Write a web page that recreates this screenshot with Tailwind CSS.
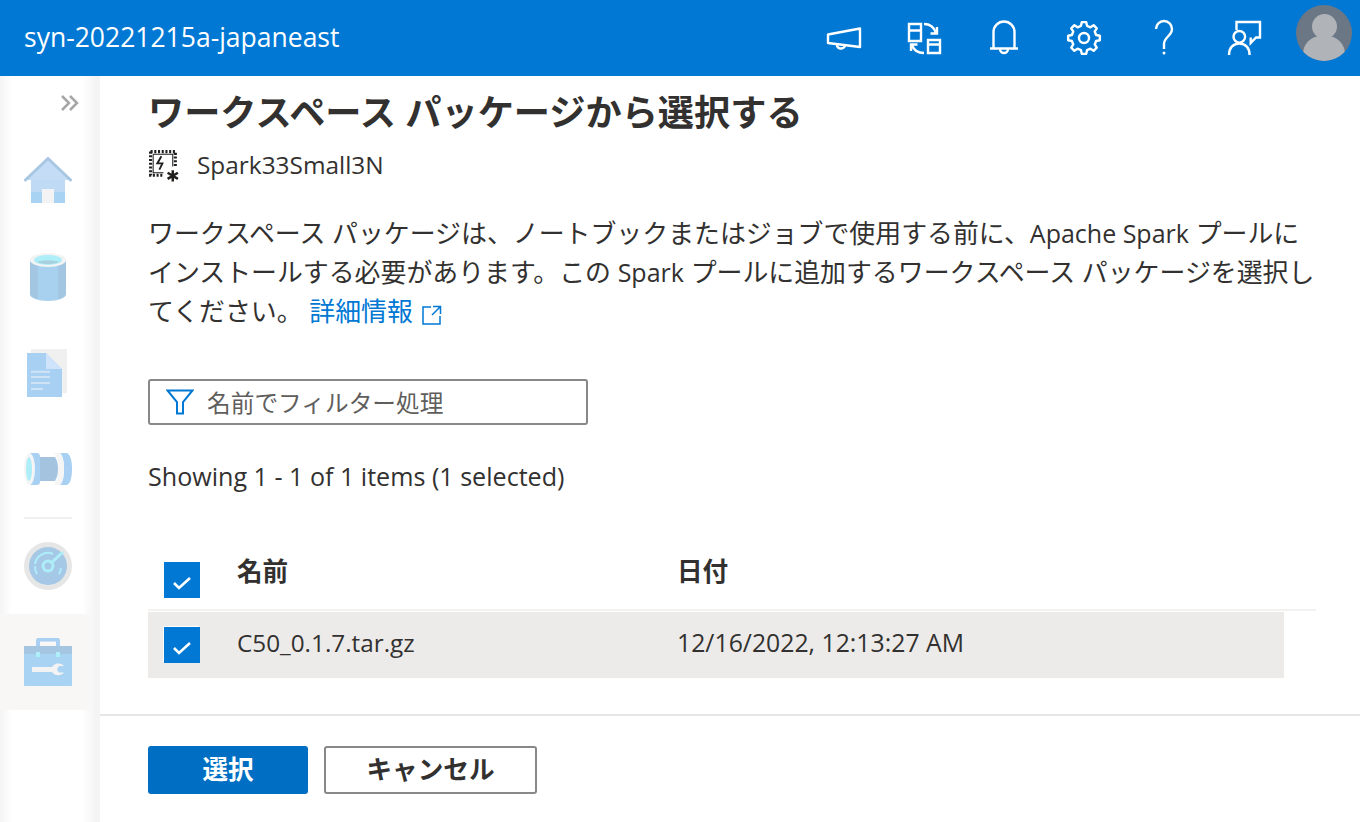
<!DOCTYPE html>
<html lang="ja">
<head>
  <meta charset="UTF-8">
  <title>syn-20221215a-japaneast</title>
  <script src="https://cdn.jsdelivr.net/npm/@tailwindcss/browser@4"></script>
</head>
<body class="bg-white text-[#323130] font-['Open_Sans','Noto_Sans_CJK_JP',sans-serif] h-[822px] w-[1360px] overflow-hidden flex flex-col">

  <!-- Top bar -->
  <header class="h-[76px] bg-[#0078d4] text-white flex items-center justify-between pl-6 pr-2 shrink-0">
    <span class="text-[26.500px]">syn-20221215a-japaneast</span>
    <div class="flex items-center h-full">
      <button class="w-20 flex justify-center">
        <svg width="40" height="40" viewBox="0 0 40 40" fill="none" stroke="white" stroke-width="2.400" stroke-linejoin="round"><path d="M4 16.500 36 10.500V29L4 25Z"/><path d="M13 26.500a4 3.500 0 0 0 8 1"/></svg>
      </button>
      <button class="w-20 flex justify-center">
        <svg width="40" height="40" viewBox="0 0 40 40" fill="none" stroke="white" stroke-width="2.400"><path d="M5 6h12v17H5ZM5 12.500h12M24 22h12v13H24ZM24 26.500h12"/><path d="M20 6c6 0 10 3 12 9M33 9v6.500h-6.500M20 35c-6 0-10-2-12-8M7 33v-6.500h6.500"/></svg>
      </button>
      <button class="w-20 flex justify-center">
        <svg width="40" height="40" viewBox="0 0 40 40" fill="none" stroke="white" stroke-width="2.400"><path d="M9.500 30V14a10.500 10.500 0 0 1 21 0v16M6 30.500h28M16 31a4 4 0 0 0 8 0"/></svg>
      </button>
      <button class="w-20 flex justify-center">
        <svg width="40" height="40" viewBox="0 0 40 40" fill="none" stroke="white" stroke-width="2.400" stroke-linejoin="round"><polygon points="17.77,4.16 22.23,4.16 23.02,7.87 26.44,9.29 29.63,7.22 32.78,10.37 30.71,13.56 32.13,16.98 35.84,17.77 35.84,22.23 32.13,23.02 30.71,26.44 32.78,29.63 29.63,32.78 26.44,30.71 23.02,32.13 22.23,35.84 17.77,35.84 16.98,32.13 13.56,30.71 10.37,32.78 7.22,29.63 9.29,26.44 7.87,23.02 4.16,22.23 4.16,17.77 7.87,16.98 9.29,13.56 7.22,10.37 10.37,7.22 13.56,9.29 16.98,7.87"/><circle cx="20" cy="20" r="5"/></svg>
      </button>
      <button class="w-20 flex justify-center">
        <svg width="40" height="40" viewBox="0 0 40 40" fill="none" stroke="white" stroke-width="2.400"><path d="M12 11a8 8 0 0 1 16 0c0 7-8 8-8 15v5"/><circle cx="20" cy="35" r="1.500" fill="white" stroke="none"/></svg>
      </button>
      <button class="w-20 flex justify-center">
        <svg width="40" height="40" viewBox="0 0 40 40" fill="none" stroke="white" stroke-width="2.400"><path d="M12.500 12V4H36v15.500h-4L26.700 25v-5.500"/><circle cx="15.300" cy="18.800" r="5.800"/><path d="M5 37c0-7 4-11.500 10.300-11.500S25.600 30 25.600 37"/></svg>
      </button>
      <div class="ml-3 w-14 h-14 -mt-2.5 rounded-full bg-[#6b7785] overflow-hidden flex flex-col items-center">
        <div class="w-[25px] h-[29px] mt-[9px] rounded-full bg-[#b0b4b8]"></div>
        <div class="w-[42px] h-7 -mt-[3px] rounded-t-[18px] bg-[#b0b4b8]"></div>
      </div>
    </div>
  </header>

  <div class="flex flex-1 min-h-0">

    <!-- Side nav -->
    <nav class="w-[100px] shrink-0 border-r-4 border-[#f4f4f4] bg-[linear-gradient(90deg,#f4f4f4,#fff_12%,#fff_86%,#f4f4f4)] flex flex-col">
      <div class="h-[57px] flex justify-end items-center pr-[16px] pb-[3px]">
        <svg width="20" height="18" viewBox="0 0 20 18" fill="none" stroke="#a6a6a6" stroke-width="2.500"><path d="M2 2l7 7-7 7M10 2l7 7-7 7"/></svg>
      </div>
      <div class="h-24 flex items-center justify-center">
        <svg width="48" height="48" viewBox="0 0 48 48"><path d="M7 22h34v24H7Z" fill="#a8d3f2"/><path d="M1.500 23 24 1.500 46.500 23" fill="#c5dcf6" stroke="#a7c7e3" stroke-width="3" stroke-linejoin="round" stroke-linecap="round"/><path d="M7 23h34v12H7Z" fill="#bfdaf5"/><path d="M18 32h12v14H18Z" fill="#f3f3f3"/></svg>
      </div>
      <div class="h-24 flex items-center justify-center">
        <svg width="48" height="48" viewBox="0 0 48 48"><path d="M6 7h36v34c0 4-8 7-18 7S6 45 6 41Z" fill="#a8d0ef"/><path d="M6 7h8v39c-5-1-8-3-8-5ZM42 7h-8v39c5-1 8-3 8-5Z" fill="#a3c6e2"/><ellipse cx="24" cy="7" rx="18" ry="7" fill="#f3f3f3"/><ellipse cx="24" cy="7" rx="14" ry="5" fill="#aeeef8"/><path d="M13 9a12 3 0 0 1 22 0c-3 1.500-7 2-11 2s-8-.5-11-2Z" fill="#a8d0de"/></svg>
      </div>
      <div class="h-24 flex items-center justify-center">
        <svg width="48" height="48" viewBox="0 0 48 48"><rect x="7" y="0" width="36" height="44" fill="#f0f0f0"/><path d="M3 4h19l16 16v28H3Z" fill="#a8d0f2"/><path d="M22 4l16 16H22Z" fill="#cfe4fa"/><path d="M7 22.700h19M7 28h19M7 34h19M7 40h12" stroke="#cfe3f5" stroke-width="2"/></svg>
      </div>
      <div class="h-24 flex items-center justify-center">
        <svg width="48" height="48" viewBox="0 0 48 48"><path d="M36 8h6c4 0 6 7 6 16s-2 16-6 16h-6c3-3 4-9 4-16s-1-13-4-16Z" fill="#a8d0f2"/><path d="M30 8h6c3 3 4 9 4 16s-1 13-4 16h-6c3-3 4-9 4-16s-1-13-4-16Z" fill="#f5f5f5"/><path d="M10 12h21c2 3 3 7 3 12s-1 9-3 12H10Z" fill="#a3c3df"/><path d="M6 8h7c2 0 3 1 3 4v24c0 3-1 4-3 4H6Z" fill="#a8d0f2"/><ellipse cx="5.500" cy="24" rx="5.500" ry="16" fill="#f5f5f5"/><ellipse cx="5" cy="24" rx="3" ry="12" fill="#aeeef8"/></svg>
      </div>
      <div class="h-0.5 mx-6 bg-[#f0f0f0] w-12 -mb-px"></div>
      <div class="h-24 flex items-center justify-center">
        <svg width="48" height="48" viewBox="0 0 48 48" fill="none"><circle cx="24" cy="24" r="24" fill="#e6e6e6"/><circle cx="24" cy="24" r="19" fill="#a5c8e6"/><circle cx="24" cy="24" r="5" stroke="#aeeef8" stroke-width="3"/><path d="M27 21 39 10" stroke="#aeeef8" stroke-width="3"/><path d="M13 32a13 13 0 0 1-2-8M35 32a13 13 0 0 0 2-6M11 22a13 13 0 0 1 18-10" stroke="#aeeef8" stroke-width="2"/></svg>
      </div>
      <div class="h-24 w-[90px] bg-[#f8f7f6] flex items-center justify-center pl-1.5">
        <svg width="48" height="48" viewBox="0 0 48 48"><path d="M14 10V3a1.500 1.500 0 0 1 1.500-1.500h17A1.500 1.500 0 0 1 34 3v7" fill="none" stroke="#a8d0f2" stroke-width="4"/><rect x="0" y="8" width="48" height="40" rx="1" fill="#a8d3f3"/><path d="M0 9a1 1 0 0 1 1-1h46a1 1 0 0 1 1 1v7H0Z" fill="#a5c6e0"/><rect x="12" y="14" width="4" height="5" fill="#aeeef8"/><rect x="32" y="14" width="4" height="5" fill="#aeeef8"/><path d="M8 29h20a7 6 0 0 1 12-1h-5l-2 3.500 2 3h5a7 6 0 0 1-12-.5H8Z" fill="#f3f3f3"/></svg>
      </div>
    </nav>

    <!-- Panel -->
    <main class="flex-1 flex flex-col min-w-0">
      <div class="flex-1 pl-12">
        <h1 class="h-[72px] flex items-center text-[36.200px] font-bold">ワークスペース パッケージから選択する</h1>

        <div class="h-[34px] flex items-center gap-[16px]">
          <svg width="33" height="33" viewBox="0 0 32 32" fill="none" stroke="#201f1e"><path d="M2.500 2.500h24v15M2.500 2.500v23h13" stroke-width="3" stroke-dasharray="2 1.600"/><path d="M5 5h19v12M5 5v18h10" stroke-width="1"/><path d="M13 7l-4 7h5l-3 6" stroke-width="1.800"/><path d="M24 20.500v11M19 23l10 6M29 23l-10 6" stroke-width="2.400"/></svg>
          <span class="text-[24.400px]">Spark33Small3N</span>
        </div>

        <p class="mt-[32px] text-[25.900px] leading-[39px] whitespace-nowrap">
          ワークスペース パッケージは、ノートブックまたはジョブで使用する前に、<span class="text-[25px]">Apache Spark</span> プールに<br>
          インストールする必要があります。この <span class="text-[25px]">Spark</span> プールに追加するワークスペース パッケージを選択し<br>
          てください。
          <a href="#" class="text-[#0078d4] inline-flex items-center gap-[9px]">詳細情報
            <svg width="20" height="20" viewBox="0 0 20 20" fill="none" stroke="#0078d4" stroke-width="1.500" class="mt-1.5"><path d="M9 2H1v17h17v-8M11 1.500h7.500V9M18 2l-8 8"/></svg>
          </a>
        </p>

        <label class="mt-[48px] w-[440px] h-[46px] border-2 border-[#8a8886] rounded-[3px] flex items-center pl-4 gap-[13px]">
          <svg width="28" height="26" viewBox="0 0 28 26" fill="none" stroke="#0078d4" stroke-width="2"><path d="M1.500 1.500h25l-9.500 11.500v11.500h-6V13Z"/></svg>
          <span class="text-[23.700px] text-[#605e5c] pt-[3px]">名前でフィルター処理</span>
        </label>

        <p class="mt-[35px] h-[34px] flex items-center text-[25.100px]">Showing 1 - 1 of 1 items (1 selected)</p>

        <!-- Table -->
        <div class="mt-[66px] w-[1168px]">
          <div class="h-[51px] border-b-2 border-[#f3f2f1] flex">
            <div class="w-[89px] pl-4 pt-[2px]">
              <span class="block w-9 h-9 bg-[#0078d4]">
                <svg width="36" height="36" viewBox="0 0 36 36" fill="none" stroke="white" stroke-width="2.600"><path d="M10 21l5 5 11-10"/></svg>
              </span>
            </div>
            <div class="w-[440px] text-[25.600px] font-bold leading-[24px]">名前</div>
            <div class="text-[25.600px] font-bold leading-[24px]">日付</div>
          </div>
          <div class="w-[1136px] h-[66px] mt-px bg-[#edebe9] flex items-center">
            <div class="w-[89px] pl-4">
              <span class="block w-9 h-9 bg-[#0078d4] shadow-[-1px_-1px_0_#fff]">
                <svg width="36" height="36" viewBox="0 0 36 36" fill="none" stroke="white" stroke-width="2.600"><path d="M10 21l5 5 11-10"/></svg>
              </span>
            </div>
            <div class="w-[440px] text-[24.300px] pb-1">C50_0.1.7.tar.gz</div>
            <div class="text-[24.800px] pb-1">12/16/2022, 12:13:27 AM</div>
          </div>
        </div>
      </div>

      <!-- Footer -->
      <footer class="h-[108px] border-t-2 border-[#e6e6e6] pl-12 pt-[30px] flex gap-4 items-start">
        <button class="w-40 h-12 bg-[#006fc3] rounded-[3px] text-white text-[25.600px] font-bold">選択</button>
        <button class="w-[213px] h-12 border-2 border-[#8a8886] rounded-[3px] text-[25.600px] font-bold">キャンセル</button>
      </footer>
    </main>
  </div>

</body>
</html>
